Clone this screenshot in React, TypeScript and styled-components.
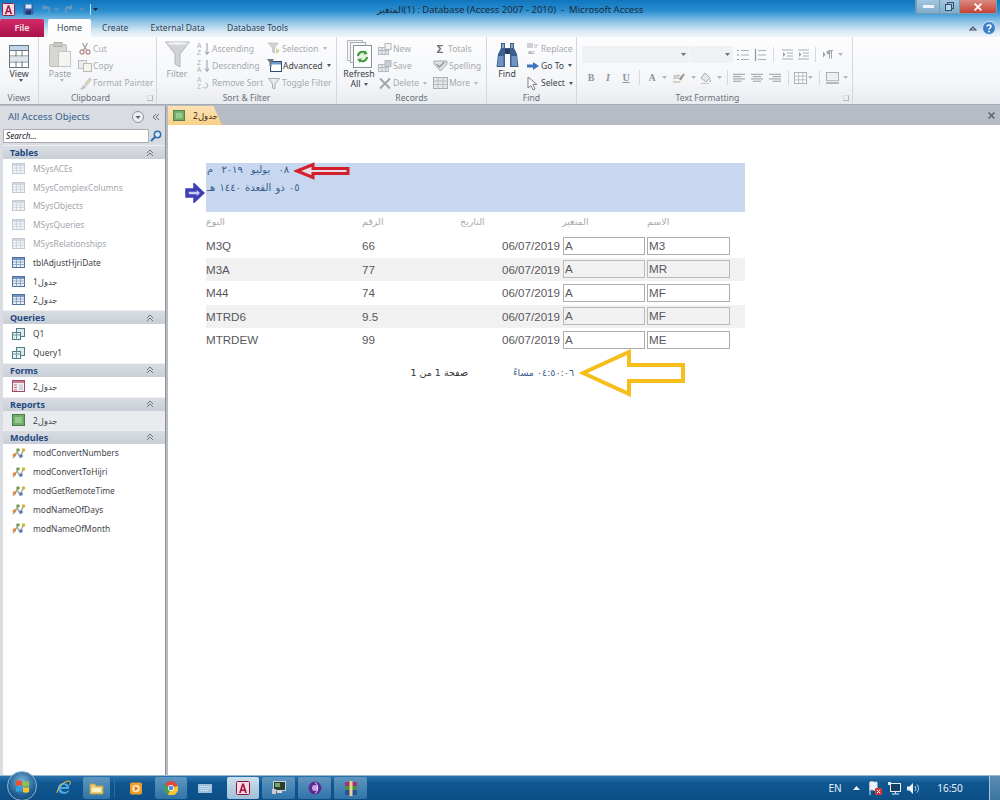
import React from 'react'
import styled, { createGlobalStyle } from 'styled-components'

const UI_FONT = `"Noto Sans", "DejaVu Sans", sans-serif`

const Global = createGlobalStyle`
  html, body { margin: 0; padding: 0; height: 100%; overflow: hidden; background: #fff; }
  * { box-sizing: border-box; }
  svg { display: block; flex: none; }
`

const Page = styled.div`
  width: 1000px;
  height: 800px;
  display: flex;
  flex-direction: column;
  font-family: ${UI_FONT};
  font-size: 8.6px;
  color: #444;
  overflow: hidden;
`

/* ---- window chrome ---- */
const Chrome = styled.div`
  height: 37px;
  flex: none;
  background: linear-gradient(#0f76bf 0%, #2b8fd0 30%, #8cc2e6 58%, #d9e9f5 85%, #f1f5f9 100%);
  display: flex;
  flex-direction: column;
`
const TitleBar = styled.div`
  height: 19px;
  display: flex;
  align-items: flex-start;
  padding: 1px 3px 0 1px;
  position: relative;
`
const QuickAccess = styled.div`
  display: flex;
  align-items: center;
  width: 376px;
  height: 16px;
`
const Quick = styled.div<{ $ml: number }>`
  margin-left: ${p => p.$ml}px;
`
const QuickSep = styled.div`
  width: 1px;
  height: 11px;
  margin-left: 6px;
  background: #c8dcea;
`
const Title = styled.div`
  font-size: 9.5px;
  line-height: 17px;
  color: #1d2a38;
  white-space: pre;
  width: 250px;
`
const WindowButtons = styled.div`
  margin-left: auto;
  display: flex;
  height: 14px;
  margin-top: -1px;
  border: 1px solid #7a9ab4;
  border-top: none;
  border-radius: 0 0 3px 3px;
  overflow: hidden;
`
const WinBtn = styled.div<{ $w: number; $close?: boolean }>`
  width: ${p => p.$w}px;
  display: flex;
  align-items: center;
  justify-content: center;
  background: ${p => (p.$close ? 'linear-gradient(#d98a80, #c64236)' : 'linear-gradient(#a3c6de, #7eaccb)')};
  border-left: 1px solid #7a9ab4;
`
const TabRow = styled.div`
  flex: 1;
  display: flex;
  align-items: flex-end;
  padding-right: 4px;
`
const FileTab = styled.div`
  width: 44px;
  height: 18px;
  background: linear-gradient(#d42a68, #a91349);
  border-radius: 2px 2px 0 0;
  color: #f6e0e8;
  font-size: 9px;
  font-weight: 600;
  text-align: center;
  line-height: 18px;
  margin-right: 4px;
`
const HomeTab = styled.div`
  width: 43px;
  height: 18px;
  background: #fcfdfe;
  border-radius: 2px 2px 0 0;
  color: #3a4654;
  font-size: 8.8px;
  text-align: center;
  line-height: 19px;
`
const Tab = styled.div<{ $ml: number }>`
  margin-left: ${p => p.$ml}px;
  height: 18px;
  line-height: 18px;
  font-size: 8.6px;
  color: #32414f;
`
const HelpGroup = styled.div`
  margin-left: auto;
  display: flex;
  align-items: center;
  gap: 5px;
  height: 18px;
`

/* ---- ribbon ---- */
const Ribbon = styled.div`
  height: 68px;
  flex: none;
  display: flex;
  background: linear-gradient(#fdfdfe, #f3f5f8 70%, #e8ebef);
  border-bottom: 1px solid #a5abb3;
`
const Group = styled.div<{ $w: number }>`
  width: ${p => p.$w}px;
  flex: none;
  display: flex;
  flex-direction: column;
  border-right: 1px solid #d4d8de;
  position: relative;
`
const GroupBody = styled.div<{ $pl?: number }>`
  height: 55px;
  display: flex;
  padding: 3px 0 0 ${p => p.$pl ?? 0}px;
`
const GroupLabel = styled.div<{ $pr?: number }>`
  height: 12px;
  line-height: 12px;
  text-align: center;
  font-size: 8.6px;
  color: #6b7076;
  padding-right: ${p => p.$pr ?? 0}px;
`
const Launcher = styled.div`
  position: absolute;
  right: 3px;
  bottom: 3px;
  width: 6px;
  height: 6px;
  border: 1px solid #b4b8bd;
  border-top-color: #d8dadd;
  border-left-color: #d8dadd;
`
const LargeBtn = styled.div<{ $w: number; $dim?: boolean }>`
  width: ${p => p.$w}px;
  flex: none;
  display: flex;
  flex-direction: column;
  align-items: center;
  font-size: 8.8px;
  line-height: 10px;
  color: ${p => (p.$dim ? '#9a9ea3' : '#3c4148')};
  text-align: center;
`
const LargeIcon = styled.div`
  height: 28px;
  margin-bottom: 1px;
  display: flex;
  align-items: flex-end;
  justify-content: center;
`
const Caret = styled.span<{ $dim?: boolean }>`
  display: inline-block;
  width: 0;
  height: 0;
  border-left: 2.5px solid transparent;
  border-right: 2.5px solid transparent;
  border-top: 3px solid ${p => (p.$dim ? '#b4b8bd' : '#4c5560')};
  vertical-align: middle;
  margin-left: 3px;
`
const SmallCol = styled.div<{ $w: number; $ml?: number }>`
  width: ${p => p.$w}px;
  margin-left: ${p => p.$ml ?? 0}px;
  flex: none;
  display: flex;
  flex-direction: column;
`
const SmallBtn = styled.div<{ $dim?: boolean }>`
  height: 17.5px;
  display: flex;
  align-items: center;
  gap: 1px;
  white-space: nowrap;
  font-size: 8.6px;
  color: ${p => (p.$dim ? '#a6aaae' : '#3c4148')};
`
const FmtRows = styled.div`
  display: flex;
  flex-direction: column;
  padding: 6px 0 0 5px;
  gap: 6px;
`
const FmtRow = styled.div`
  height: 17px;
  display: flex;
  align-items: center;
`
const Combo = styled.div<{ $w: number }>`
  width: ${p => p.$w}px;
  height: 17px;
  margin-right: 1px;
  background: #eff1f4;
  display: flex;
  align-items: center;
  justify-content: flex-end;
  padding-right: 3px;
`
const Glyph = styled.span<{ $w: number }>`
  width: ${p => p.$w}px;
  text-align: center;
  font-family: "Liberation Serif", serif;
  font-weight: bold;
  font-size: 10px;
  color: #8f959c;
`
const FmtIcon = styled.div<{ $w: number }>`
  width: ${p => p.$w}px;
  flex: none;
  display: flex;
  justify-content: center;
  align-items: center;
`
const FmtSep = styled.div<{ $l: number; $r: number }>`
  width: 1px;
  height: 15px;
  flex: none;
  background: #d6d9dd;
  margin: 0 ${p => p.$r}px 0 ${p => p.$l}px;
`

/* ---- work area ---- */
const Work = styled.div`
  flex: 1;
  display: flex;
  min-height: 0;
  background: #b7bcc4;
  padding-top: 1px;
`
const NavPane = styled.div`
  width: 166px;
  flex: none;
  padding-left: 3px;
  background: #d9dce1;
  border-right: 1px solid #8f949b;
  display: flex;
  flex-direction: column;
`
const NavHead = styled.div`
  height: 21px;
  padding: 0 5px 0 5px;
  display: flex;
  align-items: center;
  font-size: 9.8px;
  color: #38618f;
  justify-content: space-between;
`
const NavHeadBtns = styled.div`
  display: flex;
  align-items: center;
  gap: 8px;
`
const SearchRow = styled.div`
  height: 17px;
  display: flex;
  align-items: center;
  padding-right: 2px;
`
const SearchBox = styled.div`
  flex: 1;
  height: 14px;
  background: #fff;
  border: 1px solid #a9aeb5;
  font-size: 8.2px;
  font-style: italic;
  line-height: 12px;
  padding-left: 2px;
  color: #222;
`
const SearchBtn = styled.div`
  width: 14px;
  display: flex;
  justify-content: center;
`
const NavList = styled.div`
  flex: 1;
  background: #fff;
  margin-top: 1px;
`
const SectionHead = styled.div`
  height: 14px;
  background: linear-gradient(#d9dde3, #c9ced6);
  display: flex;
  align-items: center;
  justify-content: space-between;
  padding: 0 11px 0 7px;
  font-size: 9px;
  font-weight: 700;
  color: #1f4a80;
  border-top: 1px solid #eef0f3;
`
const NavItem = styled.div<{ $dim?: boolean; $sel?: boolean }>`
  height: 18.8px;
  display: flex;
  align-items: center;
  padding-left: 9px;
  gap: 4px;
  font-size: 8.4px;
  white-space: nowrap;
  background: ${p => (p.$sel ? '#e9ebee' : 'transparent')};
  color: ${p => (p.$dim ? '#a3a7ac' : '#3f444b')};
`
const NavDivider = styled.div`
  height: 1px;
  background: #fff;
`
const DocArea = styled.div`
  flex: 1;
  display: flex;
  flex-direction: column;
  min-width: 0;
  margin-left: 2px;
`
const DocTabs = styled.div`
  height: 19px;
  flex: none;
  display: flex;
  justify-content: space-between;
  align-items: flex-end;
  padding-right: 5px;
`
const DocTab = styled.div`
  width: 54px;
  height: 19px;
  background: linear-gradient(#fbe3b4, #fbd089);
  clip-path: polygon(0 0, 84% 0, 100% 100%, 0 100%);
  display: flex;
  align-items: center;
  gap: 4px;
  padding-left: 5px;
  font-size: 8.5px;
  color: #3a3020;
`
const DocClose = styled.div`
  height: 19px;
  display: flex;
  align-items: center;
`
const ReportCanvas = styled.div`
  flex: 1;
  background: #fff;
  padding: 38px 0 0 38px;
  position: relative;
`
const ReportHeader = styled.div`
  width: 539px;
  height: 49px;
  background: #c6d7ef;
  padding: 0 0 0 1px;
  color: #3b5e8e;
  font-family: "DejaVu Sans", sans-serif;
  font-size: 10px;
`
const HeaderLine = styled.div<{ $ws?: number }>`
  width: fit-content;
  direction: rtl;
  height: 18px;
  line-height: 14px;
  word-spacing: ${p => p.$ws ?? 0}px;
`
const ReportRow = styled.div<{ $alt?: boolean; $label?: boolean }>`
  width: 539px;
  height: ${p => (p.$label ? 22 : 23.5)}px;
  display: grid;
  grid-template-columns: 156px 98px 100px 85px 85px 15px;
  align-items: ${p => (p.$label ? 'start' : 'center')};
  background: ${p => (p.$alt ? '#f1f1f1' : 'transparent')};
  font-family: "Liberation Sans", Arial, sans-serif;
  font-size: 11.6px;
  color: #58585c;
`
const Caption = styled.div`
  font-family: "DejaVu Sans", sans-serif;
  font-size: 9.5px;
  line-height: 15px;
  margin-top: 2px;
  color: #a9a9a9;
  direction: rtl;
  width: fit-content;
`
const DateCell = styled.div`
  text-align: right;
`
const FieldCell = styled.div`
  padding-left: 2px;
`
const Field = styled.div<{ $alt?: boolean; $w: number; $ml?: number }>`
  width: ${p => p.$w}px;
  height: 18px;
  margin-left: ${p => p.$ml ?? 0}px;
  background: ${p => (p.$alt ? '#f1f1f1' : '#fff')};
  border: 1px solid ${p => (p.$alt ? '#b9b9b9' : '#adadad')};
  line-height: 16px;
  padding-left: 1px;
`
const ReportFooter = styled.div`
  display: flex;
  width: 539px;
  height: 18px;
  margin-top: 12px;
  align-items: center;
  font-family: "DejaVu Sans", sans-serif;
  font-size: 9.5px;
  direction: ltr;
`
const PageNo = styled.div`
  margin-left: 205px;
  width: 57px;
  direction: rtl;
  color: #333;
  white-space: pre;
`
const Clock = styled.div`
  margin-left: 40px;
  width: 66px;
  direction: rtl;
  color: #3b5e8e;
  white-space: nowrap;
`
const ArrowOverlay = styled.div<{ $x: number; $y: number }>`
  position: absolute;
  left: ${p => p.$x}px;
  top: ${p => p.$y}px;
`

/* ---- taskbar ---- */
const Taskbar = styled.div`
  height: 25px;
  flex: none;
  display: flex;
  align-items: center;
  background: linear-gradient(#2a73ad, #0f5690 30%, #0c4f86);
  border-top: 1px solid #9ab8d0;
  position: relative;
`
const StartOrb = styled.div`
  width: 30px;
  height: 30px;
  margin: -5px 0 0 7px;
  border-radius: 50%;
  background: radial-gradient(circle at 50% 35%, #7fb6dc, #205f92 60%, #123f6b);
  border: 1px solid #8eb6d2;
  display: flex;
  align-items: center;
  justify-content: center;
  flex: none;
`
const TaskSlot = styled.div<{ $w: number; $ml?: number; $box?: boolean; $active?: boolean }>`
  width: ${p => p.$w}px;
  height: 22px;
  margin-left: ${p => p.$ml ?? 0}px;
  flex: none;
  display: flex;
  align-items: center;
  justify-content: center;
  border-radius: 2px;
  background: ${p =>
    p.$active
      ? 'linear-gradient(#cfe0ec, #9fc0d8)'
      : p.$box
        ? 'linear-gradient(#5f96bf, #2f74a8)'
        : 'transparent'};
`
const TaskSep = styled.div`
  width: 1px;
  height: 20px;
  margin-left: 4px;
  background: #2d6c9e;
`
const Tray = styled.div`
  margin-left: auto;
  display: flex;
  align-items: center;
  height: 100%;
  color: #e8f0f7;
`
const TrayText = styled.div<{ $w: number }>`
  width: ${p => p.$w}px;
  text-align: center;
  font-size: 10px;
`
const ShowDesktop = styled.div`
  width: 11px;
  height: 100%;
  margin-left: 11px;
  background: linear-gradient(#5d8db2, #3b74a0);
  border-left: 1px solid #a8c4d8;
`

/* ---- icons ---- */
const AccessIcon = ({ size = 14 }: { size?: number }) => (
  <svg width={size} height={size} viewBox="0 0 14 14">
    <rect x=".5" y=".5" width="13" height="13" rx="1" fill="#f6dbe4" stroke="#8a1538" />
    <path d="M3 12 6.2 2.5h1.6L11 12H9.1l-.6-2H5.4l-.6 2Zm2.9-3.6h2.1L7 5Z" fill="#a3153f" />
  </svg>
)
const SaveIcon = () => (
  <svg width="11" height="11" viewBox="0 0 11 11">
    <rect x=".5" y=".5" width="10" height="10" rx="1" fill="#3d5fa6" />
    <rect x="2.5" y=".5" width="6" height="4" fill="#dfe7f2" />
    <rect x="3" y="6.5" width="5" height="4" fill="#22386a" />
  </svg>
)
const UndoIcon = ({ flip }: { flip?: boolean }) => (
  <svg width="10" height="10" viewBox="0 0 10 10" style={flip ? { transform: 'scaleX(-1)' } : undefined}>
    <path d="M2.5 1v3.5H6M2.5 4.5C4 2 8.5 2.5 8.5 6c0 1.500-1 2.500-2 3" fill="none" stroke="#6e98bf" strokeWidth="1.500" />
  </svg>
)
const SmallCaret = ({ c = '#5f90b8' }: { c?: string }) => (
  <svg width="5" height="3" viewBox="0 0 5 3"><path d="M0 0h5L2.500 3Z" fill={c} /></svg>
)
const ViewIcon = () => (
  <svg width="20" height="23" viewBox="0 0 20 23">
    <rect x=".5" y=".5" width="19" height="22" fill="#fff" stroke="#6c7680" />
    <path d="M.5 5.500h19M.5 11h19M.5 17h19M7 .5v22M13 .5v22" stroke="#6c7680" />
    <rect x="1" y="1" width="18" height="4" fill="#c3d6e8" />
    <rect x="1" y="11.500" width="18" height="5" fill="#dde6ee" />
  </svg>
)
const PasteIcon = () => (
  <svg width="22" height="26" viewBox="0 0 22 26">
    <rect x=".5" y="2.500" width="17" height="22" rx="1" fill="#d6d6d2" stroke="#bdbdb8" />
    <rect x="5" y=".5" width="8" height="4" fill="#c9c9c5" stroke="#b2b2ad" />
    <rect x="9.500" y="9.500" width="12" height="15" fill="#f4f4f3" stroke="#c5c5c2" />
  </svg>
)
const CutIcon = () => (
  <svg width="14" height="13" viewBox="0 0 14 13">
    <path d="M4.500 1 8.500 8M9.500 1l-4 7" stroke="#a2a2a0" strokeWidth="1.300" fill="none" />
    <circle cx="4" cy="10" r="2" fill="none" stroke="#b98f8f" strokeWidth="1.300" />
    <circle cx="10" cy="10" r="2" fill="none" stroke="#b98f8f" strokeWidth="1.300" />
  </svg>
)
const CopyIcon = () => (
  <svg width="14" height="12" viewBox="0 0 14 12">
    <rect x=".5" y=".5" width="8" height="8" fill="#e7ecf0" stroke="#b7bfc6" />
    <rect x="5.500" y="3.500" width="8" height="8" fill="#f2f2ee" stroke="#c1bda9" />
  </svg>
)
const PainterIcon = () => (
  <svg width="14" height="13" viewBox="0 0 14 13">
    <path d="M1 12c3 0 3-3 5-4l2 2c-1 2-4 3-7 2Z" fill="#c2c2be" />
    <path d="m6.500 7 5-6 2 1.500-5 6.500Z" fill="#d6d2bd" stroke="#bbb6a1" strokeWidth=".5" />
  </svg>
)
const FunnelIcon = () => (
  <svg width="25" height="27" viewBox="0 0 25 27">
    <path d="M.5 1h24L15 13v13l-5-3V13Z" fill="#cfd2d6" stroke="#b3b7bb" />
    <ellipse cx="12.500" cy="2.500" rx="11" ry="1.500" fill="#eceef0" />
  </svg>
)
const SortIcon = ({ top, bottom }: { top: string; bottom: string }) => (
  <svg width="14" height="14" viewBox="0 0 14 14">
    <text x="0" y="6" fontSize="6.500" fontFamily="Liberation Sans" fill="#a6abb1">{top}</text>
    <text x="0" y="13" fontSize="6.500" fontFamily="Liberation Sans" fill="#a6abb1">{bottom}</text>
    <path d="M10 1v11M8 9.500l2 3 2-3" fill="none" stroke="#8e99a5" />
  </svg>
)
const RemoveSortIcon = () => (
  <svg width="14" height="14" viewBox="0 0 14 14">
    <text x="0" y="6" fontSize="6.500" fontFamily="Liberation Sans" fill="#b2b6bb">A</text>
    <text x="0" y="13" fontSize="6.500" fontFamily="Liberation Sans" fill="#b2b6bb">Z</text>
    <path d="M8 7a2.500 2.500 0 1 1 .1 5c-1 0-2-.5-2-1" fill="none" stroke="#bcc2c8" strokeWidth="1.200" />
  </svg>
)
const SelFilterIcon = () => (
  <svg width="14" height="13" viewBox="0 0 14 13">
    <path d="M1 1h10L7.500 6v5l-2-1V6Z" fill="#cfd2d6" stroke="#b6babf" strokeWidth=".7" />
    <path d="m9 6 4 3-4 3Z" fill="#d7cfa5" />
  </svg>
)
const AdvancedIcon = () => (
  <svg width="15" height="13" viewBox="0 0 15 13">
    <rect x="3.500" y="2.500" width="11" height="10" fill="#fff" stroke="#2f4d74" />
    <rect x="4" y="3" width="10" height="2.500" fill="#6f9ac6" />
    <path d="M0 0h7L4.500 3.500V8l-2-1V3.500Z" fill="#6d7780" />
  </svg>
)
const ToggleIcon = () => (
  <svg width="14" height="13" viewBox="0 0 14 13">
    <path d="M1.500 1.500h11L8 7v5l-2.500-1V7Z" fill="#e8eaec" stroke="#a9aeb3" />
  </svg>
)
const RefreshIcon = () => (
  <svg width="25" height="28" viewBox="0 0 25 28">
    <rect x=".5" y=".5" width="15" height="20" fill="#f4f4f4" stroke="#b5bac0" />
    <rect x="3.500" y="2.500" width="15" height="20" fill="#f7f7f7" stroke="#a9aeb4" />
    <rect x="6.500" y="5.500" width="18" height="22" fill="#fff" stroke="#8a9096" />
    <circle cx="15.500" cy="16.500" r="6" fill="#e5f2e0" />
    <path d="M11 16a4.500 4.500 0 0 1 8-2.500M20 17a4.500 4.500 0 0 1-8 2.500" fill="none" stroke="#3f9a3a" strokeWidth="2" />
    <path d="m18 10 2.500 4-4 .5ZM13 23l-2.500-4 4-.5Z" fill="#3f9a3a" />
  </svg>
)
const RecordIcon = ({ plus }: { plus?: boolean }) => (
  <svg width="14" height="12" viewBox="0 0 14 12">
    <rect x=".5" y="4.500" width="10" height="7" fill="#e4e8ec" stroke="#b5bbc1" />
    <path d="M.5 7.500h10M4 4.500v7M7.500 4.500v7" stroke="#b5bbc1" />
    <rect x="7" y=".5" width="6" height="6" fill={plus ? '#f4f4ee' : '#c3ccd6'} stroke="#b4b9bf" />
  </svg>
)
const DeleteIcon = () => (
  <svg width="14" height="13" viewBox="0 0 14 13">
    <path d="M2 1.500 12 11.500M12 1.500 2 11.500" stroke="#9da3aa" strokeWidth="1.800" />
  </svg>
)
const MoreIcon = () => (
  <svg width="15" height="12" viewBox="0 0 15 12">
    <rect x=".5" y=".5" width="14" height="11" fill="#e6e8eb" stroke="#a9aeb4" />
    <path d="M.5 4h14M.5 7.500h14M5 .5v11M10 .5v11" stroke="#b8bcc1" />
  </svg>
)
const SigmaGlyph = styled.span`
  width: 14px;
  text-align: center;
  font-size: 11px;
  font-weight: bold;
  color: #6f7277;
`
const SpellIcon = () => (
  <svg width="15" height="12" viewBox="0 0 15 12">
    <path d="M1 1h13v3L7.500 11 1 4Z" fill="#dfe1e3" stroke="#a9adb1" />
    <path d="m3.500 4 3 3 5-5" fill="none" stroke="#8e9398" strokeWidth="1.400" />
  </svg>
)
const BinocularIcon = () => (
  <svg width="23" height="26" viewBox="0 0 23 26">
    <path d="M5 1h4v5h5V1h4v5l3 6 1.500 13H14V12H9v13H.5L2 12l3-6Z" fill="#3d5f8f" />
    <path d="M2.500 14h5v10h-6ZM15.500 14h5l1 10h-6Z" fill="#6f94c0" />
    <rect x="9" y="7" width="5" height="5" fill="#27405f" />
    <path d="M6 2h2v4H6ZM15 2h2v4h-2Z" fill="#8ba6c5" />
  </svg>
)
const ReplaceIcon = () => (
  <svg width="14" height="13" viewBox="0 0 14 13">
    <rect x="1" y="1" width="6" height="5" fill="#ccd0d4" />
    <text x="2" y="12" fontSize="6" fontFamily="Liberation Sans" fill="#868b90">ac</text>
    <path d="M8 3h4M8 5h3" stroke="#b8bcc0" />
  </svg>
)
const GoToIcon = () => (
  <svg width="14" height="10" viewBox="0 0 14 10">
    <path d="M1 3.500h6V1l6 4-6 4V6.500H1Z" fill="#3f76c2" />
  </svg>
)
const CursorIcon = () => (
  <svg width="14" height="15" viewBox="0 0 14 15">
    <path d="M2 1v11l3-2.500L7 14l2-1-2-4.500h4Z" fill="#fff" stroke="#7a8087" />
  </svg>
)
const ListIcon = ({ num }: { num?: boolean }) => (
  <svg width="12" height="12" viewBox="0 0 12 12">
    <path d="M4 1.500h8M4 6h8M4 10.500h8" stroke="#aab0b7" />
    <path d={num ? 'M1.500 0v12' : 'M0 1.500h2M0 6h2M0 10.500h2'} stroke="#8b95a1" strokeWidth="1.200" />
  </svg>
)
const IndentIcon = () => (
  <svg width="11" height="11" viewBox="0 0 11 11">
    <path d="M0 1h11M5 4h6M5 7h6M0 10h11" stroke="#a9aeb4" />
    <path d="M1 3 3.500 5.500 1 8Z" fill="#9aa0a7" />
  </svg>
)
const ParaIcon = () => (
  <svg width="10" height="9" viewBox="0 0 10 9">
    <path d="M0 1.500 2.500 4.500 0 7.500Z" fill="#9aa0a7" />
    <path d="M6 .5h4M6.500 .5v8M8.500 .5v8" stroke="#a0a5ab" />
    <circle cx="5.500" cy="2.500" r="2" fill="#a0a5ab" />
  </svg>
)
const HighlightIcon = () => (
  <svg width="12" height="11" viewBox="0 0 12 11">
    <text x="0" y="7" fontSize="7" fontFamily="Liberation Sans" fill="#a0a4a9">ab</text>
    <path d="m7 8 4-6" stroke="#9a9384" strokeWidth="2" />
    <path d="M0 10h7" stroke="#c9c6b2" strokeWidth="1.500" />
  </svg>
)
const FillIcon = () => (
  <svg width="12" height="12" viewBox="0 0 12 12">
    <path d="M5 1 10 6 6 10 1 6Z" fill="#e6e7e9" stroke="#a6abb1" />
    <path d="M10 7c1 1.500 1.500 2 .8 3-.8.600-1.600-.2-1.300-1Z" fill="#b0b4b8" />
    <path d="M1 11.500h8" stroke="#c9c6b2" />
  </svg>
)
const AlignIcon = ({ mode }: { mode: 'l' | 'c' | 'r' }) => {
  const x = mode === 'l' ? 0 : mode === 'c' ? 2 : 4
  return (
    <svg width="12" height="10" viewBox="0 0 13 10">
      <path d={`M0 1h13M${x} 3.500h9M0 6h13M${x} 8.500h9`} stroke="#8f959c" />
    </svg>
  )
}
const GridIcon = () => (
  <svg width="13" height="12" viewBox="0 0 14 13">
    <rect x=".5" y=".5" width="13" height="12" fill="#fff" stroke="#a6abb1" />
    <path d="M.5 4.500h13M.5 8.500h13M5 .5v12M9.500.5v12" stroke="#b4b8bd" />
  </svg>
)
const GridlineIcon = () => (
  <svg width="13" height="12" viewBox="0 0 14 13">
    <rect x=".5" y=".5" width="13" height="9" fill="#eef0f2" stroke="#a6abb1" />
    <path d="M0 12h14" stroke="#9a9fa5" strokeWidth="1.500" />
  </svg>
)
const TableIcon = ({ dim }: { dim?: boolean }) => (
  <svg width="13" height="11" viewBox="0 0 13 11" style={{ marginRight: 4 }}>
    <rect x=".5" y=".5" width="12" height="10" fill={dim ? '#f1f3f6' : '#eaf0f8'} stroke={dim ? '#c1c9d3' : '#4f6f9c'} />
    <rect x="1" y="1" width="11" height="2" fill={dim ? '#cfd7e1' : '#6f93c4'} />
    <path d="M.5 5h12M.5 7.500h12M4.500 3v7.500M8.500 3v7.500" stroke={dim ? '#cbd2dc' : '#7d97ba'} strokeWidth=".8" />
  </svg>
)
const QueryIcon = () => (
  <svg width="13" height="12" viewBox="0 0 13 12" style={{ marginRight: 4 }}>
    <rect x="4.500" y=".5" width="8" height="8" fill="#dfe9ea" stroke="#4f7d86" />
    <rect x=".5" y="4.500" width="8" height="7" fill="#e9f0f2" stroke="#4f7d86" />
    <path d="M.5 7h8M4.500 4.500v7" stroke="#6f98a0" />
  </svg>
)
const FormIcon = () => (
  <svg width="13" height="12" viewBox="0 0 13 12" style={{ marginRight: 4 }}>
    <rect x=".5" y=".5" width="12" height="11" fill="#f8eef0" stroke="#a04c68" />
    <rect x="1" y="1" width="11" height="2" fill="#c97d95" />
    <path d="M2 5h3M2 7.500h3M2 10h3" stroke="#a77" />
    <rect x="7" y="4.500" width="4" height="5.500" fill="#cbd6e6" />
  </svg>
)
const ReportIcon = ({ size = 13 }: { size?: number }) => (
  <svg width={size} height={size - 1} viewBox="0 0 13 12" style={{ marginRight: 4 }}>
    <rect x=".5" y=".5" width="12" height="11" fill="#6fae66" stroke="#4f7d4a" />
    <rect x="3" y="3" width="7" height="6" fill="#98c98f" />
  </svg>
)
const ModuleIcon = () => (
  <svg width="14" height="12" viewBox="0 0 14 12" style={{ marginRight: 3 }}>
    <path d="M1 11 5 5l3 5 4-8" fill="none" stroke="#a8a8a0" strokeWidth="1.500" />
    <circle cx="2.500" cy="8" r="1.800" fill="#d98a3c" />
    <circle cx="6" cy="3" r="1.800" fill="#6fa052" />
    <circle cx="9" cy="9" r="1.800" fill="#4f7fc0" />
    <circle cx="11.500" cy="3" r="1.800" fill="#d4b23c" />
  </svg>
)
const DoubleChevron = ({ left }: { left?: boolean }) => (
  <svg width="8" height="8" viewBox="0 0 8 8" style={left ? { transform: 'rotate(-90deg)' } : undefined}>
    <path d="m1 4 3-3 3 3M1 7l3-3 3 3" fill="none" stroke="#6d747c" />
  </svg>
)
const NavDropdown = () => (
  <svg width="12" height="12" viewBox="0 0 12 12">
    <circle cx="6" cy="6" r="5.500" fill="#eceef1" stroke="#8e949b" />
    <path d="M3.500 5h5L6 8Z" fill="#596069" />
  </svg>
)
const MagnifierIcon = () => (
  <svg width="12" height="12" viewBox="0 0 12 12">
    <circle cx="7.500" cy="4.500" r="3.200" fill="#dbe9f6" stroke="#2f6fb0" strokeWidth="1.500" />
    <path d="M5 7 1 11" stroke="#2f6fb0" strokeWidth="2" />
  </svg>
)
const HelpIcon = () => (
  <svg width="14" height="14" viewBox="0 0 14 14">
    <circle cx="7" cy="7" r="6.500" fill="#3b7fc4" stroke="#d5e6f4" />
    <path d="M5 5.500C5 3.500 9 3.500 9 5.500 9 7 7 7 7 8.500" fill="none" stroke="#fff" strokeWidth="1.500" />
    <circle cx="7" cy="10.500" r="1" fill="#fff" />
  </svg>
)
const CollapseIcon = () => (
  <svg width="8" height="7" viewBox="0 0 8 7">
    <path d="M1 5 4 2l3 3Z" fill="none" stroke="#4a5560" strokeWidth="1.200" />
  </svg>
)
const CloseX = ({ c = '#5b626a', s = 7 }: { c?: string; s?: number }) => (
  <svg width={s} height={s} viewBox="0 0 7 7">
    <path d="m.5.5 6 6M6.500.5l-6 6" stroke={c} strokeWidth="1.500" />
  </svg>
)
const RedArrow = () => (
  <svg width="57" height="18" viewBox="0 0 57 18">
    <path d="M3 9 19 2.500v4h35v5H19v4Z" fill="#e6dde6" stroke="#d3202c" strokeWidth="3" />
  </svg>
)
const BlueArrow = () => (
  <svg width="20" height="20" viewBox="0 0 20 20">
    <path d="M2 7h8V3l7.500 7L10 17v-4H2Z" fill="#c9cdf0" stroke="#3f3fb4" strokeWidth="3.500" />
  </svg>
)
const YellowArrow = () => (
  <svg width="108" height="48" viewBox="0 0 108 48">
    <path d="M4 24 50 3v13h54v16H50v13Z" fill="#fff" stroke="#f7bd1b" strokeWidth="4" />
  </svg>
)
const WinLogo = () => (
  <svg width="15" height="14" viewBox="0 0 15 14">
    <path d="M1 2c2-1 4-1 6 0v5C5 6 3 6 1 7Z" fill="#e8552d" />
    <path d="M8 2c2 1 4 1 6 0v5c-2 1-4 1-6 0Z" fill="#8cc63f" />
    <path d="M1 8c2-1 4-1 6 0v5c-2-1-4-1-6 0Z" fill="#2f9fe0" />
    <path d="M8 8c2 1 4 1 6 0v5c-2 1-4 1-6 0Z" fill="#f7c325" />
  </svg>
)
const IEIcon = () => (
  <svg width="15" height="16" viewBox="0 0 15 16">
    <path d="M13 9H5c.3 3 5 4 7 1.500h1.500C11 15.500 2 15 2 8.500S10.500 1.500 13 6c.3.8 0 3 0 3ZM5 7h5.500C10 4 5.500 4 5 7Z" fill="#48a9e6" />
    <path d="M1 13C1 8 8 1 13 1c2 0 1.500 3 .5 4" fill="none" stroke="#f0c53a" strokeWidth="1" />
  </svg>
)
const FolderIcon = () => (
  <svg width="15" height="13" viewBox="0 0 15 13">
    <path d="M1 2h5l1 2h7v8H1Z" fill="#e9cf7c" stroke="#b39a4a" />
    <rect x="3" y="6" width="9" height="4" fill="#fbf1c7" />
  </svg>
)
const MediaIcon = () => (
  <svg width="12" height="13" viewBox="0 0 14 14">
    <rect width="14" height="14" rx="2" fill="#ef9b28" />
    <circle cx="7" cy="7" r="4.500" fill="#fbe3b8" />
    <path d="M5.500 4.500 10 7l-4.500 2.500Z" fill="#d9730e" />
  </svg>
)
const ChromeIcon = () => (
  <svg width="14" height="14" viewBox="0 0 14 14">
    <circle cx="7" cy="7" r="7" fill="#e0483c" />
    <path d="M1 3.500 7 7l-3 6.500A7 7 0 0 1 1 3.500Z" fill="#3ea34e" />
    <path d="M13.600 5 7 7l-3 6.800A7 7 0 0 0 13.600 5Z" fill="#f7c92f" />
    <circle cx="7" cy="7" r="3" fill="#fff" />
    <circle cx="7" cy="7" r="2.300" fill="#4a8fe0" />
  </svg>
)
const KeyboardIcon = () => (
  <svg width="14" height="9" viewBox="0 0 14 9">
    <rect width="14" height="9" fill="#9cc0dc" />
    <path d="M1.500 2.500h11M1.500 4.500h11M3 6.500h8" stroke="#e4eef6" strokeDasharray="1.200 .8" />
  </svg>
)
const MonitorIcon = () => (
  <svg width="15" height="14" viewBox="0 0 15 14">
    <rect x="2.500" y=".5" width="12" height="9" fill="#2c3e30" stroke="#c8d2d8" />
    <rect x="4" y="2" width="5" height="4" fill="#72a863" />
    <rect x="1" y="8" width="4" height="5" fill="#c8ccd0" />
    <rect x="6" y="10" width="5" height="2" fill="#d6dade" />
  </svg>
)
const PurpleIcon = () => (
  <svg width="14" height="14" viewBox="0 0 14 14">
    <circle cx="7" cy="7" r="6.500" fill="#5a2c92" />
    <circle cx="7" cy="7" r="3" fill="#c8a3ea" />
    <path d="M7 1.500c3.500 1.500 3.500 9.500 0 11" stroke="#f0e4fa" fill="none" />
  </svg>
)
const RarIcon = () => (
  <svg width="14" height="15" viewBox="0 0 14 15">
    <rect x="1" y="1" width="12" height="4" rx="1" fill="#a62f74" />
    <rect x="1" y="5" width="12" height="4" rx="1" fill="#4d8f3f" />
    <rect x="1" y="9" width="12" height="5" rx="1" fill="#2b4f98" />
    <rect x="5.500" y="0" width="3" height="15" fill="#e8d48b" />
  </svg>
)
const FlagIcon = () => (
  <svg width="14" height="15" viewBox="0 0 14 15">
    <path d="M1 1c3-1 4 1 7 0v8c-3 1-4-1-7 0ZM1 1v13" fill="#eef3f7" stroke="#dfe8ef" />
    <rect x="6" y="7" width="7" height="7" rx="1" fill="#cf3a3a" />
    <path d="m8 9 3 3M11 9l-3 3" stroke="#fff" />
  </svg>
)
const NetIcon = () => (
  <svg width="15" height="14" viewBox="0 0 15 14">
    <rect x="3.500" y="2.500" width="10" height="8" fill="#173f63" stroke="#e6eef5" />
    <path d="M8.500 10.500v2M5 13h7" stroke="#e6eef5" />
    <path d="M1 1h3v3H1Z" fill="#e6eef5" />
  </svg>
)
const VolumeIcon = () => (
  <svg width="14" height="13" viewBox="0 0 14 13">
    <path d="M1 4.500h2.500L7 1v11L3.500 8.500H1Z" fill="#eaf1f6" />
    <path d="M9 4c1 1.500 1 3.500 0 5M11 2.500c2 2.500 2 5.500 0 8" fill="none" stroke="#d4e1ea" />
  </svg>
)
const UpTriangle = () => (
  <svg width="7" height="4" viewBox="0 0 7 4"><path d="M0 4 3.500 0 7 4Z" fill="#e8f0f7" /></svg>
)

const TableRows = [
  { type: 'M3Q', num: '66', name: 'M3' },
  { type: 'M3A', num: '77', name: 'MR' },
  { type: 'M44', num: '74', name: 'MF' },
  { type: 'MTRD6', num: '9.5', name: 'MF' },
  { type: 'MTRDEW', num: '99', name: 'ME' },
]

const Section = ({ title }: { title: string }) => (
  <SectionHead>
    {title}
    <DoubleChevron />
  </SectionHead>
)

const App = () => (
  <Page>
    <Global />
    <Chrome>
      <TitleBar>
        <QuickAccess>
          <Quick $ml={1}><AccessIcon size={13} /></Quick>
          <Quick $ml={8}><SaveIcon /></Quick>
          <Quick $ml={7}><UndoIcon /></Quick>
          <Quick $ml={3}><SmallCaret /></Quick>
          <Quick $ml={5}><UndoIcon flip /></Quick>
          <Quick $ml={5}><SmallCaret /></Quick>
          <QuickSep />
          <Quick $ml={2}><SmallCaret c="#1c2c3c" /></Quick>
        </QuickAccess>
        <Title>
          <bdi>المتغير</bdi>(1) : Database (Access 2007 - 2010)  -  Microsoft Access
        </Title>
        <WindowButtons>
          <WinBtn $w={23}><svg width="11" height="3"><rect width="11" height="3" fill="#eef4f8" /></svg></WinBtn>
          <WinBtn $w={20}>
            <svg width="9" height="9" viewBox="0 0 9 9">
              <rect x="2.500" y=".5" width="6" height="6" fill="none" stroke="#30506b" />
              <rect x=".5" y="2.500" width="6" height="6" fill="#bcd4e6" stroke="#30506b" />
            </svg>
          </WinBtn>
          <WinBtn $w={37} $close><CloseX c="#fff" s={8} /></WinBtn>
        </WindowButtons>
      </TitleBar>
      <TabRow>
        <FileTab>File</FileTab>
        <HomeTab>Home</HomeTab>
        <Tab $ml={11}>Create</Tab>
        <Tab $ml={22}>External Data</Tab>
        <Tab $ml={22}>Database Tools</Tab>
        <HelpGroup>
          <CollapseIcon />
          <HelpIcon />
        </HelpGroup>
      </TabRow>
    </Chrome>

    <Ribbon>
      <Group $w={39}>
        <GroupBody $pl={7}>
          <LargeBtn $w={24}>
            <LargeIcon><ViewIcon /></LargeIcon>
            View
            <Caret />
          </LargeBtn>
        </GroupBody>
        <GroupLabel>Views</GroupLabel>
      </Group>

      <Group $w={118}>
        <GroupBody $pl={8}>
          <LargeBtn $w={26} $dim>
            <LargeIcon><PasteIcon /></LargeIcon>
            Paste
            <Caret $dim />
          </LargeBtn>
          <SmallCol $w={80} $ml={5}>
            <SmallBtn $dim><CutIcon />Cut</SmallBtn>
            <SmallBtn $dim><CopyIcon />Copy</SmallBtn>
            <SmallBtn $dim><PainterIcon />Format Painter</SmallBtn>
          </SmallCol>
        </GroupBody>
        <GroupLabel $pr={14}>Clipboard</GroupLabel>
        <Launcher />
      </Group>

      <Group $w={180}>
        <GroupBody $pl={7}>
          <LargeBtn $w={26} $dim>
            <LargeIcon><FunnelIcon /></LargeIcon>
            Filter
          </LargeBtn>
          <SmallCol $w={70} $ml={7}>
            <SmallBtn $dim><SortIcon top="A" bottom="Z" />Ascending</SmallBtn>
            <SmallBtn $dim><SortIcon top="Z" bottom="A" />Descending</SmallBtn>
            <SmallBtn $dim><RemoveSortIcon />Remove Sort</SmallBtn>
          </SmallCol>
          <SmallCol $w={68}>
            <SmallBtn $dim><SelFilterIcon />Selection<Caret $dim /></SmallBtn>
            <SmallBtn><AdvancedIcon />Advanced<Caret /></SmallBtn>
            <SmallBtn $dim><ToggleIcon />Toggle Filter</SmallBtn>
          </SmallCol>
        </GroupBody>
        <GroupLabel>Sort &amp; Filter</GroupLabel>
      </Group>

      <Group $w={150}>
        <GroupBody $pl={5}>
          <LargeBtn $w={34}>
            <LargeIcon><RefreshIcon /></LargeIcon>
            Refresh
            <span>All<Caret /></span>
          </LargeBtn>
          <SmallCol $w={55} $ml={2}>
            <SmallBtn $dim><RecordIcon plus />New</SmallBtn>
            <SmallBtn $dim><RecordIcon />Save</SmallBtn>
            <SmallBtn $dim><DeleteIcon />Delete<Caret $dim /></SmallBtn>
          </SmallCol>
          <SmallCol $w={52}>
            <SmallBtn $dim><SigmaGlyph>Σ</SigmaGlyph>Totals</SmallBtn>
            <SmallBtn $dim><SpellIcon />Spelling</SmallBtn>
            <SmallBtn $dim><MoreIcon />More<Caret $dim /></SmallBtn>
          </SmallCol>
        </GroupBody>
        <GroupLabel>Records</GroupLabel>
      </Group>

      <Group $w={90}>
        <GroupBody $pl={6}>
          <LargeBtn $w={28}>
            <LargeIcon><BinocularIcon /></LargeIcon>
            Find
          </LargeBtn>
          <SmallCol $w={54} $ml={5}>
            <SmallBtn $dim><ReplaceIcon />Replace</SmallBtn>
            <SmallBtn><GoToIcon />Go To<Caret /></SmallBtn>
            <SmallBtn><CursorIcon />Select<Caret /></SmallBtn>
          </SmallCol>
        </GroupBody>
        <GroupLabel>Find</GroupLabel>
      </Group>

      <Group $w={276}>
        <GroupBody>
          <FmtRows>
            <FmtRow>
              <Combo $w={107}><SmallCaret c="#6b7076" /></Combo>
              <Combo $w={43}><SmallCaret c="#6b7076" /></Combo>
              <FmtIcon $w={17}><ListIcon /></FmtIcon>
              <FmtIcon $w={17}><ListIcon num /></FmtIcon>
              <FmtSep $l={5} $r={5} />
              <FmtIcon $w={16}><IndentIcon /></FmtIcon>
              <FmtIcon $w={16}><IndentIcon /></FmtIcon>
              <FmtSep $l={4} $r={5} />
              <FmtIcon $w={14}><ParaIcon /></FmtIcon>
              <FmtIcon $w={10}><SmallCaret c="#b4b8bd" /></FmtIcon>
            </FmtRow>
            <FmtRow>
              <Glyph $w={18}>B</Glyph>
              <Glyph $w={16}><i>I</i></Glyph>
              <Glyph $w={20}><u>U</u></Glyph>
              <FmtSep $l={3} $r={3} />
              <Glyph $w={18}>A</Glyph>
              <FmtIcon $w={6}><SmallCaret c="#b4b8bd" /></FmtIcon>
              <FmtIcon $w={24}><HighlightIcon /></FmtIcon>
              <FmtIcon $w={4}><SmallCaret c="#b4b8bd" /></FmtIcon>
              <FmtIcon $w={22}><FillIcon /></FmtIcon>
              <FmtIcon $w={4}><SmallCaret c="#b4b8bd" /></FmtIcon>
              <FmtSep $l={6} $r={3} />
              <FmtIcon $w={16}><AlignIcon mode="l" /></FmtIcon>
              <FmtIcon $w={19}><AlignIcon mode="c" /></FmtIcon>
              <FmtIcon $w={18}><AlignIcon mode="r" /></FmtIcon>
              <FmtSep $l={4} $r={3} />
              <FmtIcon $w={16}><GridIcon /></FmtIcon>
              <FmtIcon $w={5}><SmallCaret c="#b4b8bd" /></FmtIcon>
              <FmtSep $l={6} $r={3} />
              <FmtIcon $w={18}><GridlineIcon /></FmtIcon>
              <FmtIcon $w={8}><SmallCaret c="#b4b8bd" /></FmtIcon>
            </FmtRow>
          </FmtRows>
        </GroupBody>
        <GroupLabel $pr={14}>Text Formatting</GroupLabel>
        <Launcher />
      </Group>
    </Ribbon>

    <Work>
      <NavPane>
        <NavHead>
          All Access Objects
          <NavHeadBtns>
            <NavDropdown />
            <DoubleChevron left />
          </NavHeadBtns>
        </NavHead>
        <SearchRow>
          <SearchBox>Search...</SearchBox>
          <SearchBtn><MagnifierIcon /></SearchBtn>
        </SearchRow>
        <NavList>
          <Section title="Tables" />
          <NavItem $dim><TableIcon dim />MSysACEs</NavItem>
          <NavItem $dim><TableIcon dim />MSysComplexColumns</NavItem>
          <NavItem $dim><TableIcon dim />MSysObjects</NavItem>
          <NavItem $dim><TableIcon dim />MSysQueries</NavItem>
          <NavItem $dim><TableIcon dim />MSysRelationships</NavItem>
          <NavItem><TableIcon />tblAdjustHjriDate</NavItem>
          <NavItem><TableIcon />جدول1</NavItem>
          <NavItem><TableIcon />جدول2</NavItem>
          <NavDivider />
          <Section title="Queries" />
          <NavItem><QueryIcon />Q1</NavItem>
          <NavItem><QueryIcon />Query1</NavItem>
          <NavDivider />
          <Section title="Forms" />
          <NavItem><FormIcon />جدول2</NavItem>
          <NavDivider />
          <Section title="Reports" />
          <NavItem $sel><ReportIcon />جدول2</NavItem>
          <Section title="Modules" />
          <NavItem><ModuleIcon />modConvertNumbers</NavItem>
          <NavItem><ModuleIcon />modConvertToHijri</NavItem>
          <NavItem><ModuleIcon />modGetRemoteTime</NavItem>
          <NavItem><ModuleIcon />modNameOfDays</NavItem>
          <NavItem><ModuleIcon />modNameOfMonth</NavItem>
        </NavList>
      </NavPane>

      <DocArea>
        <DocTabs>
          <DocTab><ReportIcon size={12} />جدول2</DocTab>
          <DocClose><CloseX /></DocClose>
        </DocTabs>
        <ReportCanvas>
          <ReportHeader>
            <HeaderLine $ws={5}>٠٨ يوليو ٢٠١٩ م</HeaderLine>
            <HeaderLine $ws={1}>٠٥ ذو القعدة ١٤٤٠ هـ</HeaderLine>
          </ReportHeader>
          <ReportRow $label>
            <Caption>النوع</Caption>
            <Caption>الرقم</Caption>
            <Caption>التاريخ</Caption>
            <FieldCell><Caption>المتغير</Caption></FieldCell>
            <FieldCell><Caption>الاسم</Caption></FieldCell>
          </ReportRow>
          {TableRows.map((r, i) => (
            <ReportRow key={i} $alt={i % 2 === 1}>
              <div>{r.type}</div>
              <div>{r.num}</div>
              <DateCell>06/07/2019</DateCell>
              <FieldCell><Field $alt={i % 2 === 1} $w={82} $ml={1}>A</Field></FieldCell>
              <FieldCell><Field $alt={i % 2 === 1} $w={83}>{r.name}</Field></FieldCell>
            </ReportRow>
          ))}
          <ReportFooter>
            <PageNo>صفحة 1 من 1</PageNo>
            <Clock>٠٤:٥٠:٠٦ مساءً</Clock>
          </ReportFooter>
          <ArrowOverlay $x={126} $y={37}><RedArrow /></ArrowOverlay>
          <ArrowOverlay $x={17} $y={58}><BlueArrow /></ArrowOverlay>
          <ArrowOverlay $x={411} $y={224}><YellowArrow /></ArrowOverlay>
        </ReportCanvas>
      </DocArea>
    </Work>

    <Taskbar>
      <StartOrb><WinLogo /></StartOrb>
      <TaskSlot $w={28} $ml={12}><IEIcon /></TaskSlot>
      <TaskSlot $w={27} $ml={6} $box><FolderIcon /></TaskSlot>
      <TaskSep />
      <TaskSlot $w={30} $ml={6}><MediaIcon /></TaskSlot>
      <TaskSlot $w={32} $ml={4} $box><ChromeIcon /></TaskSlot>
      <TaskSlot $w={30} $ml={3}><KeyboardIcon /></TaskSlot>
      <TaskSlot $w={32} $ml={7} $active><AccessIcon /></TaskSlot>
      <TaskSlot $w={33} $ml={3} $box><MonitorIcon /></TaskSlot>
      <TaskSlot $w={33} $ml={3} $box><PurpleIcon /></TaskSlot>
      <TaskSlot $w={33} $ml={3} $box><RarIcon /></TaskSlot>
      <Tray>
        <TrayText $w={20}>EN</TrayText>
        <TaskSlot $w={22}><UpTriangle /></TaskSlot>
        <TaskSlot $w={18}><FlagIcon /></TaskSlot>
        <TaskSlot $w={19}><NetIcon /></TaskSlot>
        <TaskSlot $w={18}><VolumeIcon /></TaskSlot>
        <TrayText $w={56}>16:50</TrayText>
        <ShowDesktop />
      </Tray>
    </Taskbar>
  </Page>
)

export default App
